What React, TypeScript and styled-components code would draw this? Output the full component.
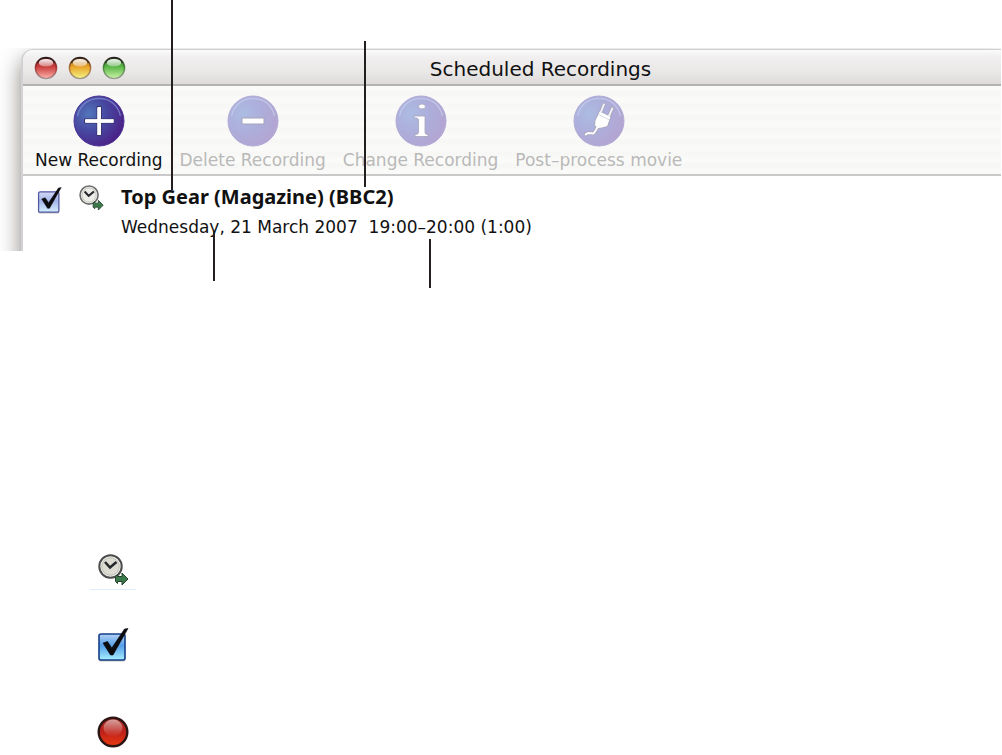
import React, { useState } from "react";
import styled, { createGlobalStyle } from "styled-components";

const GlobalStyle = createGlobalStyle`
  *, *::before, *::after { box-sizing: border-box; }
  body { margin: 0; background: #fff; color: #111; font-family: "DejaVu Sans", Verdana, sans-serif; }
  svg { display: block; overflow: visible; }
`;

const Page = styled.main`
  position: relative;
  padding-top: 48px;
  overflow: hidden;
`;

const Frame = styled.section`
  padding: 1px 0 0 21px;
  margin-right: 1px;
  overflow: hidden;
`;

const Window = styled.div`
  margin-bottom: -40px;
  padding-bottom: 52px;
  border-top: 1px solid #cfcfcf;
  border-left: 2px solid #d2d2d4;
  border-top-left-radius: 12px;
  background: #fff;
  box-shadow: 0 10px 22px rgba(20, 10, 0, 0.5);
`;

const TitleBar = styled.header`
  display: grid;
  grid-template-columns: 1fr auto 1fr;
  align-items: center;
  height: 36px;
  padding: 1px 0 0 11px;
  border-bottom: 2px solid #b4b3b3;
  border-top-left-radius: 10px;
  background: linear-gradient(#fbfbfb, #f1efef 20%, #ebe8e8 60%, #dddcdb);
`;

const Lights = styled.div`
  display: flex;
  gap: 10px;
`;

const LightButton = styled.button`
  width: 24px;
  height: 24px;
  padding: 0;
  border: 0;
  background: none;
`;

const Title = styled.h1`
  margin: 0 0 0 46px;
  padding-top: 2px;
  font-size: 20px;
  line-height: 24px;
  font-weight: 400;
`;

const Toolbar = styled.nav`
  display: flex;
  gap: 17px;
  height: 90px;
  padding: 9px 12px 0;
  border-bottom: 2px solid #c9c9ca;
  background: repeating-linear-gradient(#fafaf8 0 4px, #f7f7f5 6px 9px, #fafaf8 12px);
`;

const ToolButton = styled.button`
  display: flex;
  flex-direction: column;
  align-items: center;
  gap: 2px;
  padding: 0;
  border: 0;
  background: none;
  color: #111;
  font: 17px/22px "DejaVu Sans", Verdana, sans-serif;
  white-space: nowrap;

  &:disabled { color: #b9b9b9; }
`;

const Recording = styled.article`
  display: grid;
  grid-template-columns: 26px 26px auto;
  gap: 16px;
  align-items: start;
  padding: 9px 14px 0;
`;

const Details = styled.div`
  display: flex;
  flex-direction: column;
  gap: 6px;
`;

const Programme = styled.h2`
  margin: 0;
  font: 700 20px/24px "Noto Sans", "Open Sans", sans-serif;
  white-space: nowrap;
`;

const Schedule = styled.p`
  margin: 0;
  font-size: 17px;
  line-height: 24px;
  white-space: pre;
`;

const CheckLabel = styled.label`
  display: grid;
  padding-top: 2px;

  > * { grid-area: 1 / 1; }
`;

const CheckInput = styled.input`
  width: 100%;
  height: 100%;
  margin: 0;
  opacity: 0;
`;

const Callout = styled.span<{ $x: number; $y: number; $length: number }>`
  position: absolute;
  left: ${(p) => p.$x}px;
  top: ${(p) => p.$y}px;
  width: 2px;
  height: ${(p) => p.$length}px;
  background: #231f20;
`;

const Legend = styled.ul`
  display: flex;
  flex-direction: column;
  align-items: flex-start;
  gap: 38px;
  margin: 303px 0 0;
  padding: 0 90px 7px;
  list-style: none;
`;

const LegendItem = styled.li<{ $underlined?: boolean; $after?: number }>`
  display: flex;
  justify-content: center;
  width: 46px;
  padding-bottom: ${(p) => p.$after ?? 0}px;
  border-bottom: ${(p) => (p.$underlined ? "1px solid #dfeafa" : "0")};
`;

type Tone = { id: string; dark: string; mid: string; light: string };

function Light({ tone, label }: { tone: Tone; label: string }) {
  return (
    <LightButton aria-label={label}>
      <svg width="24" height="24" viewBox="0 0 24 24">
        <defs>
          <linearGradient id={tone.id} x1="0" y1="0" x2="0" y2="1">
            <stop offset="0" stopColor={tone.dark} />
            <stop offset="0.45" stopColor={tone.mid} />
            <stop offset="1" stopColor={tone.light} />
          </linearGradient>
          <linearGradient id={`${tone.id}-rim`} x1="0" y1="0" x2="0" y2="1">
            <stop offset="0" stopColor="#2b2020" />
            <stop offset="0.5" stopColor={tone.dark} stopOpacity="0.8" />
            <stop offset="1" stopColor="#8d8585" stopOpacity="0.8" />
          </linearGradient>
          <linearGradient id={`${tone.id}-gloss`} x1="0" y1="0" x2="0" y2="1">
            <stop offset="0" stopColor="#fff" stopOpacity="0.95" />
            <stop offset="1" stopColor="#fff" stopOpacity="0.35" />
          </linearGradient>
        </defs>
        <circle cx="12" cy="12" r="10.6" fill={`url(#${tone.id})`} stroke={`url(#${tone.id}-rim)`} strokeWidth="1.4" />
        <path d="M3.5 7A10 10 0 0 1 20.5 7" fill="none" stroke="#1d1414" strokeWidth="1.6" opacity="0.6" />
        <ellipse cx="12" cy="6.8" rx="7.3" ry="3.8" fill={`url(#${tone.id}-gloss)`} />
      </svg>
    </LightButton>
  );
}

function Disc({ id, dim, children }: { id: string; dim?: boolean; children: React.ReactNode }) {
  return (
    <svg width="52" height="52" viewBox="0 0 52 52" aria-hidden="true">
      <defs>
        <radialGradient id={id} cx="0.3" cy="0.36" r="0.72">
          <stop offset="0" stopColor={dim ? "#acbce2" : "#5276bb"} />
          <stop offset="0.5" stopColor={dim ? "#adaedb" : "#4747a0"} />
          <stop offset="1" stopColor={dim ? "#b3a5d2" : "#4c2388"} />
        </radialGradient>
      </defs>
      <circle cx="26" cy="26" r="25" fill={`url(#${id})`} stroke={dim ? "#b2abd6" : "#4a3297"} />
      <path
        d="M4.5 21C7 10 15 3.5 26 3.5C37 3.5 45 10 47.5 21"
        fill="none"
        stroke={dim ? "#c3cdea" : "#7b8fd0"}
        strokeWidth="1.3"
        opacity="0.75"
      />
      {children}
    </svg>
  );
}

function PlusIcon() {
  return (
    <Disc id="disc-new">
      <path d="M24 11.5H28.5V24H41V28H28.5V40.5H24V28H11.5V24H24Z" fill="#fff" stroke="#39346f" strokeWidth="1" />
      <path d="M26.2 13V40M12.5 26H40.5" stroke="#fff" strokeWidth="3.6" />
    </Disc>
  );
}

function MinusIcon() {
  return (
    <Disc id="disc-delete" dim>
      <rect x="15" y="23" width="22" height="6" fill="#fff" stroke="#a5a3b8" strokeWidth="1" />
    </Disc>
  );
}

function InfoIcon() {
  return (
    <Disc id="disc-change" dim>
      <ellipse cx="27" cy="11.5" rx="3.4" ry="2.5" fill="#fff" stroke="#a5a3b8" strokeWidth="0.8" />
      <path
        d="M19 21H30V37.5Q30 39.5 33 39.5V41.5H20V39.5Q23.5 39.5 23.5 37.5V25Q23.5 22.8 19 22.8Z"
        fill="#fff"
        stroke="#a5a3b8"
        strokeWidth="0.8"
      />
    </Disc>
  );
}

function PlugIcon() {
  return (
    <Disc id="disc-post" dim>
      <path d="M11.5 40L15 38L20.5 38.5L23 35L25.5 30" fill="none" stroke="#a5a3b8" strokeWidth="3.4" />
      <path d="M27.5 18L31.5 8M35.5 22L40 12" stroke="#a5a3b8" strokeWidth="3.6" />
      <path d="M26.5 16L38 21.5L34.5 31.5L29 33L25.5 33.5L21.5 30.5L22 25.5Z" fill="#fff" stroke="#a5a3b8" strokeWidth="0.9" />
      <path d="M27.5 18L31.2 8.6M35.5 22L39.7 12.6" stroke="#f1f1f8" strokeWidth="2" />
      <path d="M12 39.8L15.2 38L20.5 38.5L23 35L25.5 30" fill="none" stroke="#fff" strokeWidth="2" />
      <path d="M25.5 19.5L36.5 25" stroke="#d2d2de" strokeWidth="0.9" />
    </Disc>
  );
}

function CheckIcon({ id, size, vivid, checked = true }: { id: string; size: number; vivid?: boolean; checked?: boolean }) {
  return (
    <svg width={size} height={size + 2} viewBox="0 0 32 34" aria-hidden="true">
      <defs>
        <linearGradient id={id} x1="0" y1="0" x2="0" y2="1">
          <stop offset="0" stopColor={vivid ? "#b4d2f4" : "#d4d9f6"} />
          <stop offset="0.45" stopColor={vivid ? "#559fea" : "#a4b6e9"} />
          <stop offset="1" stopColor={vivid ? "#a8f0ff" : "#d5effd"} />
        </linearGradient>
      </defs>
      <rect x="1.5" y="30" width="27" height="3.5" rx="1.7" fill="#000" opacity="0.25" />
      <rect x="2" y="6" width="26" height="26" rx="2" fill={`url(#${id})`} stroke={vivid ? "#153f86" : "#4f55a0"} strokeWidth="1.6" />
      {checked && <path d="M6 15L10.5 13.5L14.8 20L27.5 1L31 0.5L16 27H13.5Z" fill="#0b0b10" stroke="#0b0b10" strokeWidth="0.6" />}
    </svg>
  );
}

function ClockIcon({ size, bold }: { size: number; bold?: boolean }) {
  return (
    <svg width={size} height={size} viewBox="0 0 31 31" aria-hidden="true">
      <circle cx="12.5" cy="12.5" r="11.2" fill="#f3f3ef" stroke={bold ? "#4b4b4b" : "#6c6c6c"} strokeWidth="2" />
      <circle cx="12.5" cy="12.5" r="8.8" fill={bold ? "#dcdcd2" : "#ecece8"} stroke="#bdbdb5" strokeWidth="1" />
      <path d="M7 8L12 13.5L18.5 8" fill="none" stroke="#25282a" strokeWidth="2.6" />
      <path d="M17.5 22.5L19.5 20.5V22.5H24V19L30 25L24 31V27.5H19.5V29.5L17.5 27.5Z" fill="#3a7a4b" stroke="#26422e" strokeWidth="1" />
    </svg>
  );
}

function RecordIcon() {
  return (
    <svg width="32" height="32" viewBox="0 0 32 32" aria-hidden="true">
      <defs>
        <linearGradient id="record-body" x1="0" y1="0" x2="0" y2="1">
          <stop offset="0" stopColor="#a32b25" />
          <stop offset="0.5" stopColor="#bf2118" />
          <stop offset="1" stopColor="#ea3a12" />
        </linearGradient>
        <linearGradient id="record-gloss" x1="0" y1="0" x2="0" y2="1">
          <stop offset="0" stopColor="#fff" stopOpacity="0.55" />
          <stop offset="1" stopColor="#fff" stopOpacity="0" />
        </linearGradient>
      </defs>
      <circle cx="16" cy="16" r="14.3" fill="url(#record-body)" stroke="#2c1512" strokeWidth="2.4" />
      <ellipse cx="16" cy="12" rx="9.5" ry="8.5" fill="url(#record-gloss)" />
    </svg>
  );
}

export default function App() {
  const [enabled, setEnabled] = useState(true);

  return (
    <Page>
      <GlobalStyle />
      <Frame>
        <Window>
          <TitleBar>
            <Lights>
              <Light label="Close" tone={{ id: "close", dark: "#9c1c20", mid: "#c9403f", light: "#ffb3ab" }} />
              <Light label="Minimise" tone={{ id: "minimise", dark: "#a65a14", mid: "#e9a52a", light: "#f4f487" }} />
              <Light label="Zoom" tone={{ id: "zoom", dark: "#2d7a22", mid: "#5cb748", light: "#cdf5ab" }} />
            </Lights>
            <Title>Scheduled Recordings</Title>
          </TitleBar>
          <Toolbar>
            <ToolButton><PlusIcon />New Recording</ToolButton>
            <ToolButton disabled><MinusIcon />Delete Recording</ToolButton>
            <ToolButton disabled><InfoIcon />Change Recording</ToolButton>
            <ToolButton disabled><PlugIcon />Post–process movie</ToolButton>
          </Toolbar>
          <Recording>
            <CheckLabel>
              <CheckIcon id="check-row" size={25} checked={enabled} />
              <CheckInput
                type="checkbox"
                aria-label="Record Top Gear"
                checked={enabled}
                onChange={(e) => setEnabled(e.target.checked)}
              />
            </CheckLabel>
            <ClockIcon size={25} />
            <Details>
              <Programme>Top Gear (Magazine) (BBC2)</Programme>
              <Schedule>{"Wednesday, 21 March 2007  19:00–20:00 (1:00)"}</Schedule>
            </Details>
          </Recording>
        </Window>
      </Frame>
      <Callout $x={171} $y={0} $length={190} />
      <Callout $x={364} $y={41} $length={146} />
      <Callout $x={213} $y={232} $length={49} />
      <Callout $x={429} $y={239} $length={49} />
      <Legend>
        <LegendItem $underlined $after={4}><ClockIcon size={31} bold /></LegendItem>
        <LegendItem $after={16}><CheckIcon id="check-legend" size={32} vivid /></LegendItem>
        <LegendItem><RecordIcon /></LegendItem>
      </Legend>
    </Page>
  );
}
